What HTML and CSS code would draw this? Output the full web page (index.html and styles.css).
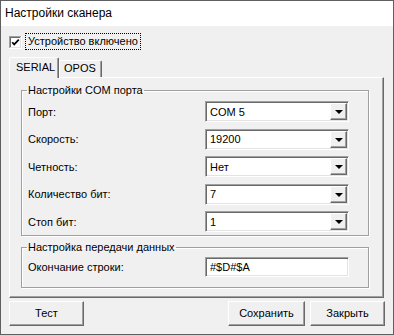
FILE: index.html
```html
<!DOCTYPE html>
<html>
<head>
<meta charset="utf-8">
<link rel="stylesheet" href="styles.css">
</head>
<body>
<div class="window">
  <div class="titlebar">Настройки сканера</div>
  <div class="content">
    <div class="checkrow">
      <svg class="checkbox" width="13" height="13" viewBox="0 0 13 13">
        <rect x="0" y="0" width="13" height="13" fill="#ffffff"/>
        <rect x="0" y="0" width="12" height="1" fill="#a0a0a0"/>
        <rect x="0" y="0" width="1" height="12" fill="#a0a0a0"/>
        <rect x="1" y="1" width="10" height="1" fill="#696969"/>
        <rect x="1" y="1" width="1" height="10" fill="#696969"/>
        <rect x="1" y="11" width="11" height="1" fill="#e3e3e3"/>
        <rect x="11" y="1" width="1" height="11" fill="#e3e3e3"/>
        <path d="M3.2 6.2 L5.2 8.4 L9.8 3.6" fill="none" stroke="#000" stroke-width="1.7"/>
      </svg>
      <span class="checklabel">Устройство включено</span>
    </div>
    <div class="tabs">
      <div class="tab active">SERIAL</div>
      <div class="tab">OPOS</div>
    </div>
    <div class="panel">
      <fieldset class="group">
        <legend>Настройки COM порта</legend>
        <div class="grid">
          <span>Порт:</span>
          <div class="combo"><span class="val">COM 5</span><span class="dd"><i></i></span></div>
          <span>Скорость:</span>
          <div class="combo"><span class="val">19200</span><span class="dd"><i></i></span></div>
          <span>Четность:</span>
          <div class="combo"><span class="val">Нет</span><span class="dd"><i></i></span></div>
          <span>Количество бит:</span>
          <div class="combo"><span class="val">7</span><span class="dd"><i></i></span></div>
          <span>Стоп бит:</span>
          <div class="combo"><span class="val">1</span><span class="dd"><i></i></span></div>
        </div>
      </fieldset>
      <fieldset class="group group2">
        <legend>Настройка передачи данных</legend>
        <div class="grid">
          <span>Окончание строки:</span>
          <div class="edit">#$D#$A</div>
        </div>
      </fieldset>
    </div>
    <div class="buttons">
      <div class="btn">Тест</div>
      <div class="btn right wide">Сохранить</div>
      <div class="btn">Закрыть</div>
    </div>
  </div>
</div>
</body>
</html>
```
FILE: styles.css
```css
html, body {
  margin: 0;
  padding: 0;
}
body {
  font-family: "Liberation Sans", Arial, sans-serif;
  font-size: 11px;
  color: #000;
  background: #f0f0f0;
}
.window {
  width: 394px;
  height: 335px;
  box-sizing: border-box;
  border: 1px solid #5f5f5f;
  background: #f0f0f0;
  display: flex;
  flex-direction: column;
}
.titlebar {
  height: 25px;
  line-height: 25px;
  background: #ffffff;
  padding-left: 4px;
  font-size: 12px;
  flex: none;
}
.content {
  flex: 1;
  display: flex;
  flex-direction: column;
  padding: 0 8px 0 8px;
}
.checkrow {
  display: flex;
  align-items: flex-start;
  margin-top: 7px;
  height: 17px;
}
.checkbox {
  margin-top: 3px;
  flex: none;
}
.checklabel {
  margin-left: 3px;
  border: 1px dotted #000;
  padding: 0 2px;
  line-height: 15px;
}
.tabs {
  display: flex;
  align-items: flex-end;
  margin-top: 7px;
  height: 20px;
}
.tab {
  box-sizing: border-box;
  height: 17px;
  line-height: 15px;
  padding: 0 5px 0 4px;
  border-top: 1px solid #ffffff;
  border-left: 1px solid #ffffff;
  border-right: 1px solid #696969;
  box-shadow: inset -1px 0 0 #a0a0a0;
  border-radius: 2px 2px 0 0;
  background: #f0f0f0;
}
.tab.active {
  position: relative;
  z-index: 1;
  height: 21px;
  margin-bottom: -1px;
  width: 50px;
  line-height: 19px;
  padding-left: 6px;
}
.panel {
  width: 375px;
  height: 221px;
  box-sizing: border-box;
  border-top: 1px solid #ffffff;
  border-left: 1px solid #ffffff;
  border-right: 1px solid #696969;
  border-bottom: 1px solid #696969;
  box-shadow: inset -1px -1px 0 #a0a0a0;
  padding: 5px 14px 0 11px;
  flex: none;
}
.group {
  margin: 0;
  padding: 4px 18px 3px 6px;
  min-width: 0;
  border: 1px solid #a0a0a0;
  box-shadow: 1px 1px 0 #ffffff, inset 1px 1px 0 #ffffff;
}
.group legend {
  padding: 0 1px;
  margin-left: -1px;
  line-height: 14px;
}
.group2 {
  margin-top: 4px;
  padding-top: 3px;
  padding-bottom: 10px;
}
.grid {
  display: grid;
  grid-template-columns: 177px 144px;
  grid-auto-rows: 21px;
  row-gap: 6.5px;
  align-items: center;
}
.group2 .grid {
  grid-auto-rows: 20px;
}
.combo, .edit {
  box-sizing: border-box;
  height: 21px;
  width: 144px;
  background: #ffffff;
  border-top: 1px solid #a0a0a0;
  border-left: 1px solid #a0a0a0;
  border-right: 1px solid #ffffff;
  border-bottom: 1px solid #ffffff;
  box-shadow: inset 1px 1px 0 #696969, inset -1px -1px 0 #e3e3e3;
  display: flex;
  align-items: center;
}
.edit {
  height: 20px;
  padding-left: 4px;
}
.val {
  flex: 1;
  padding-left: 4px;
}
.dd {
  box-sizing: border-box;
  width: 17px;
  height: 17px;
  margin-right: 1px;
  background: #f0f0f0;
  border-top: 1px solid #ffffff;
  border-left: 1px solid #ffffff;
  border-right: 1px solid #696969;
  border-bottom: 1px solid #696969;
  box-shadow: inset -1px -1px 0 #a0a0a0;
  display: flex;
  align-items: center;
  justify-content: center;
}
.dd i {
  display: block;
  width: 0;
  height: 0;
  border-left: 4px solid transparent;
  border-right: 4px solid transparent;
  border-top: 4px solid #000;
  margin-top: 1px;
}
.buttons {
  display: flex;
  margin-top: 3px;
  gap: 5px;
}
.btn {
  box-sizing: border-box;
  width: 75px;
  height: 25px;
  line-height: 22px;
  text-align: center;
  background: #f0f0f0;
  border-top: 1px solid #ffffff;
  border-left: 1px solid #ffffff;
  border-right: 1px solid #696969;
  border-bottom: 1px solid #696969;
  box-shadow: inset -1px -1px 0 #a0a0a0;
}
.btn.right {
  margin-left: auto;
}
.btn.wide {
  width: 77px;
}
```
